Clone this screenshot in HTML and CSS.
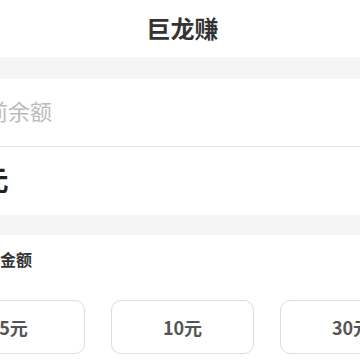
FILE: index.html
```html
<!DOCTYPE html>
<html lang="zh-CN">
<head>
    <meta charset="UTF-8">
    <meta name="viewport" content="width=device-width, initial-scale=1.0">
    <title>巨龙赚</title>
    <link rel="stylesheet" href="styles.css">
</head>
<body>
    <div class="page">
        <div class="header">巨龙赚</div>
        <div class="band"></div>
        <div class="balance">
            <div class="balance-label">当前余额</div>
            <div class="balance-amount">0元</div>
        </div>
        <div class="band"></div>
        <div class="section-title">提现金额</div>
        <div class="amount-grid">
            <div class="amount-option">5元</div>
            <div class="amount-option">10元</div>
            <div class="amount-option">30元</div>
        </div>
    </div>
</body>
</html>
```

FILE: styles.css
```css
body {
    margin: 0;
    background-color: #fff;
    font-family: "Noto Sans CJK SC", "Noto Sans", sans-serif;
    overflow: hidden;
}

.page {
    width: 505px;
    margin-left: -70px;
}

.header {
    height: 57px;
    line-height: 56px;
    text-align: center;
    font-size: 24px;
    font-weight: bold;
    color: #333;
}

.band {
    height: 22px;
    background-color: #f5f5f5;
}

.balance-label {
    padding: 20px 34px 25px;
    line-height: 22px;
    font-size: 22px;
    color: #bbb;
    border-bottom: 1px solid #e6e6e6;
}

.balance-amount {
    padding: 18px 34px 22px;
    line-height: 28px;
    font-size: 28px;
    font-weight: bold;
    color: #222;
}

.balance + .band {
    height: 20px;
}

.section-title {
    padding: 14px 38px 31px;
    line-height: 20px;
    font-size: 16px;
    font-weight: bold;
    color: #333;
}

.amount-grid {
    display: grid;
    grid-template-columns: repeat(3, 1fr);
    gap: 26px;
    padding: 0 12px;
}

.amount-option {
    height: 52px;
    border: 1px solid #ddd;
    border-radius: 10px;
    display: flex;
    align-items: center;
    justify-content: center;
    font-size: 18px;
    font-weight: bold;
    color: #555;
}
```
